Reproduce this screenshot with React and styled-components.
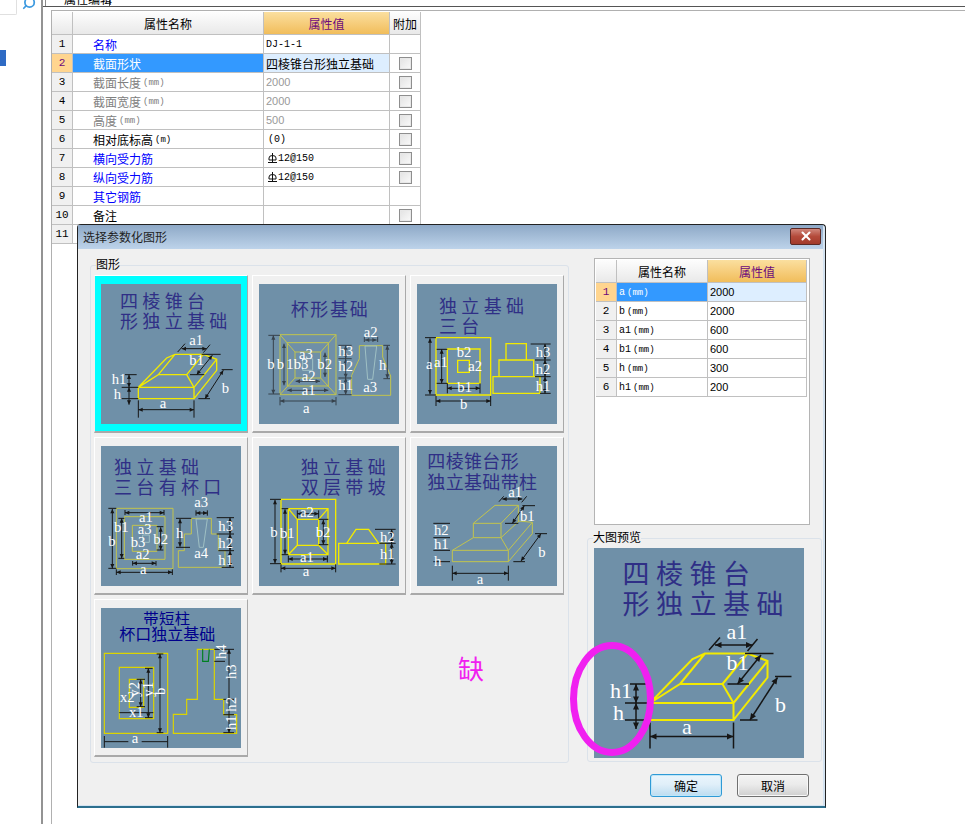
import React from "react";
import styled, { createGlobalStyle } from "styled-components";
import { Search, X } from "lucide-react";

const GlobalStyle = createGlobalStyle`
  html, body {
    margin: 0;
    padding: 0;
    background: #fff;
  }
  * { box-sizing: border-box; }
`;

const UI_FONT = `"Liberation Sans", "Noto Sans CJK SC", sans-serif`;

const Page = styled.div`
  position: relative;
  display: flex;
  width: 965px;
  height: 824px;
  overflow: hidden;
  background: #fff;
  color: #000;
  font: 12px ${UI_FONT};
`;

const Sidebar = styled.div`
  flex: 0 0 43px;
  border-right: 2px solid #939393;
`;

const SearchRow = styled.div`
  display: flex;
  height: 15px;
`;

const SearchInput = styled.div`
  width: 17px;
  border-right: 1px solid #e0e0e0;
  border-bottom: 1px solid #e0e0e0;
  border-radius: 0 0 2px 0;
`;

const SearchButton = styled.div`
  flex: 1;
  margin-top: -4px;
  padding-left: 5px;
  color: #3d9ae0;
  svg { transform: scaleX(-1); }
`;

const NavMarker = styled.div`
  width: 6px;
  height: 16px;
  margin-top: 35px;
  background: #2f6bc4;
`;

const Main = styled.div`
  flex: 1;
  min-width: 0;
`;

const TabStrip = styled.div`
  height: 7px;
  border-bottom: 1px solid #555;
  overflow: hidden;
  padding-left: 2px;
`;

const Tab = styled.div`
  width: 65px;
  height: 7px;
  padding-left: 18px;
  background: #fff;
  border-left: 1px solid #8a8a8a;
  border-right: 1px solid #555;
  white-space: nowrap;
  line-height: 0;
`;

const Sheet = styled.div`
  height: 814px;
  margin: 3px 0 0 8px;
  padding-top: 1px;
  border-top: 1px solid #b0b0b0;
  border-left: 1px solid #b0b0b0;
`;

const Grid = styled.div`
  display: grid;
  grid-template-columns: ${({ $cols }) => $cols};
  grid-template-rows: 23px;
  grid-auto-rows: 19px;
  width: max-content;
`;

const Cell = styled.div`
  display: flex;
  align-items: center;
  min-width: 0;
  white-space: nowrap;
  border-right: 1px solid #c0c0c0;
  border-bottom: 1px solid #c0c0c0;
  background: #fff;
`;

const HeadCell = styled(Cell)`
  justify-content: center;
  background: ${({ $accent }) =>
    $accent ? "linear-gradient(#fbdf9f, #f1bd5b)" : "linear-gradient(#fdfdfd, #e9e9e9)"};
  color: ${({ $accent }) => ($accent ? "#6c0a7c" : "#000")};
`;

const NumCell = styled(Cell)`
  justify-content: center;
  font: 11px "Liberation Mono", monospace;
  background: ${({ $active }) => ($active ? "#ffd58f" : "#f0f0f0")};
  color: ${({ $active }) => ($active ? "#6c0a7c" : "#000")};
`;

const toneColor = { link: "#0000ff", muted: "#808080", plain: "#000" };

const NameCell = styled(Cell)`
  padding-left: ${({ $indent }) => $indent}px;
  background: ${({ $active }) => ($active ? "#3399ff" : "#fff")};
  color: ${({ $active, $tone }) => ($active ? "#fff" : toneColor[$tone])};
`;

const valueFonts = {
  text: `12px ${UI_FONT}`,
  mono: `10px "Liberation Mono", monospace`,
  number: `11px "Liberation Sans", sans-serif`,
};

const ValueCell = styled(Cell)`
  padding-left: ${({ $indent }) => $indent || 2}px;
  background: ${({ $active }) => ($active ? "#ddeeff" : "#fff")};
  color: ${({ $muted }) => ($muted ? "#999" : "#000")};
  font: ${({ $kind }) => valueFonts[$kind || "number"]};
`;

const Unit = styled.span`
  margin: 2px 0 0 2px;
  line-height: 1;
  font: 9px "Liberation Mono", monospace;
`;

const ParamName = styled.span`
  line-height: 1;
  font: 10px "Liberation Mono", monospace;
`;

const AddCell = styled(Cell)`
  justify-content: center;
`;

const Check = styled.span`
  width: 13px;
  height: 13px;
  border: 1px solid #8e8e8e;
  background: linear-gradient(135deg, #e2e2e2, #fafafa);
  box-shadow: inset 0 0 0 1px #e8e8e8;
`;

const Rebar = styled.svg`
  width: 9px;
  height: 10px;
  margin: 0 1px 0 2px;
`;

const Dialog = styled.div`
  position: absolute;
  left: 77px;
  top: 224px;
  width: 749px;
  height: 584px;
  display: flex;
  flex-direction: column;
  padding: 0 2px 1px 0;
  background: #d4e3f1;
  border: 1px solid #222;
  border-bottom: 2px solid #2c6f8e;
  border-radius: 4px 4px 0 0;
`;

const TitleBar = styled.div`
  flex: 0 0 24px;
  display: flex;
  align-items: center;
  justify-content: space-between;
  padding: 0 2px 2px 5px;
  background: linear-gradient(#8ea9c7, #bdd3ea);
  color: #1f1f1f;
`;

const CloseButton = styled.div`
  width: 31px;
  height: 17px;
  display: flex;
  align-items: center;
  justify-content: center;
  color: #fff;
  background: linear-gradient(#d0867a, #b44a3a 50%, #a23b2c);
  border: 1px solid #5c2a26;
  border-radius: 2px;
`;

const DialogBody = styled.div`
  flex: 1;
  display: flex;
  flex-direction: column;
  padding: 9px 0 0 12px;
  background: #f0f0f0;
`;

const Columns = styled.div`
  display: flex;
  gap: 18px;
  height: 505px;
`;

const Group = styled.fieldset`
  margin: 0;
  min-width: 0;
  width: ${({ $width }) => $width}px;
  height: ${({ $height }) => $height}px;
  padding: 3px ${({ $pad }) => $pad}px 0;
  border: 1px solid #dbe2ea;
  border-radius: 3px;
`;

const Legend = styled.legend`
  padding: 0;
  margin-left: ${({ $shift }) => $shift}px;
  height: 14px;
  line-height: 14px;
  font-size: 12px;
`;

const TileGrid = styled.div`
  display: grid;
  grid-template-columns: repeat(3, 154px);
  grid-auto-rows: 158px;
  gap: 4px;
`;

const Tile = styled.div`
  display: flex;
  align-items: center;
  justify-content: center;
  background: ${({ $selected }) => ($selected ? "#00ffff" : "#f0f0f0")};
  border-top: 1px solid #fff;
  border-left: 1px solid ${({ $selected }) => ($selected ? "#f0f0f0" : "#fff")};
  border-right: 1px solid #a9a9a9;
  border-bottom: 2px solid #a9a9a9;
`;

const RightColumn = styled.div`
  display: flex;
  flex-direction: column;
  gap: 6px;
  width: 235px;
`;

const ParamBox = styled.div`
  width: 216px;
  height: 267px;
  margin-left: 7px;
  padding: 1px;
  background: #fff;
  border: 1px solid #b4b4b4;
`;

const Footer = styled.div`
  display: flex;
  justify-content: flex-end;
  gap: 15px;
  padding: 11px 14px 0 0;
`;

const Button = styled.div`
  width: 72px;
  height: 23px;
  display: flex;
  align-items: center;
  justify-content: center;
  border-radius: 3px;
  border: 1px solid ${({ $primary }) => ($primary ? "#2f9ad6" : "#707070")};
  background: ${({ $primary }) =>
    $primary ? "linear-gradient(#eaf5fc, #e0eff9 45%, #bcdcf0)" : "linear-gradient(#f3f3f3, #ebebeb 45%, #cfcfcf)"};
  box-shadow: inset 0 0 0 1px ${({ $primary }) => ($primary ? "#bfe6f8" : "#f8f8f8")};
`;

const Ring = styled.svg`
  position: absolute;
  left: 491px;
  top: 416px;
  width: 86px;
  height: 116px;
`;

const Missing = styled.div`
  position: absolute;
  left: 380px;
  top: 428px;
  color: #f020f0;
  font-size: 26px;
  line-height: 34px;
`;

// drawings are authored in 3x pixels, every picture is 420 units wide
const DrawingSvg = styled.svg`
  display: block;
  flex: none;
  width: ${({ $size }) => $size}px;
  height: ${({ $size }) => $size}px;
  background: #6f90a8;
`;

const Heading = styled.text`
  font-family: "Noto Sans CJK SC", sans-serif;
`;

const Label = styled.text`
  font-family: "Liberation Serif", serif;
  fill: #fff;
`;

const rect = (x1, y1, x2, y2) => `M${x1} ${y1}H${x2}V${y2}H${x1}Z`;
const INK = "#2f2f86";
const BRIGHT = "#f2ea00";
const OLIVE = "#c2c44e";
const PALE = "#9fc0c4";

const scenes = {
  pyramid: {
    box: "78 186 420 420",
    titles: [
      ["四棱锥台", 135, 258, 54, 13, INK],
      ["形独立基础", 135, 318, 54, 13, INK],
    ],
    shapes: [
      [BRIGHT, 4, rect(190, 496, 357, 530) + "M357 530L425 445V412L385 397H300L275 408L190 496M357 496L425 412M190 496L250 458H335L357 496M250 458L300 397M335 458L385 397"],
    ],
    ticks: "M190 535V587M357 535V587M150 458H185M140 496H190M140 530H190M440 443H473M370 530H405M308 390L330 365M385 392L405 368M380 397H437M345 458H388",
    dims: [[190, 563, 357, 563], [162, 458, 162, 496], [162, 496, 162, 548], [445, 445, 390, 530], [320, 380, 395, 380], [412, 400, 365, 458]],
    labels: [["a1", 343, 368], ["b1", 343, 430], ["h1", 110, 486], ["h", 116, 530], ["b", 440, 513], ["a", 254, 557]],
  },
  cup: {
    box: "552 186 420 420",
    titles: [["杯形基础", 647, 283, 54, 5, INK]],
    shapes: [
      [OLIVE, 3, rect(615, 338, 783, 518) + rect(637, 362, 760, 492) + rect(660, 390, 737, 468) + "M615 338L660 390M783 338L737 390M615 518L660 468M783 518L737 468M853 371H923V405L947 462V520H830V460L853 410Z"],
      [PALE, 3, rect(683, 410, 713, 445) + "M870 372H905L893 472H878Z"],
    ],
    ticks: "M580 340H615M580 516H615M615 525V550M783 525V550M790 370H830M790 410H830M790 468H830M790 518H830M868 345V360M908 345V360M925 370H945M925 470H945",
    dims: [[595, 340, 595, 516], [627, 365, 627, 490], [750, 392, 750, 465], [662, 478, 735, 478], [637, 505, 760, 505], [615, 537, 783, 537], [812, 370, 812, 410], [812, 410, 812, 468], [812, 468, 812, 518], [870, 354, 905, 354], [937, 370, 937, 470]],
    inkDim: "#37424c",
    labels: [["b", 577, 442], ["b", 605, 442], ["1b3", 634, 442], ["a3", 672, 410], ["b2", 727, 440], ["a2", 680, 478], ["a1", 680, 520], ["a", 684, 573], ["h3", 790, 402], ["h2", 790, 446], ["h1", 790, 505], ["a2", 866, 345], ["h", 912, 443], ["a3", 865, 510]],
  },
  threeTier: {
    box: "36 42 420 420",
    titles: [
      ["独立基础", 102, 128, 54, 13, INK],
      ["三台", 102, 190, 54, 13, INK],
    ],
    shapes: [
      [BRIGHT, 4, rect(93, 203, 257, 375) + rect(127, 237, 225, 340) + rect(158, 271, 193, 307) + rect(303, 221, 364, 270) + rect(282, 270, 386, 320) + rect(264, 320, 405, 370)],
    ],
    ticks: "M60 203H93M60 375H93M95 238H127M95 340H127M127 340V370M225 340V370M93 378V408M257 378V408M377 222H437M390 270H437M390 320H437M405 370H437",
    dims: [[75, 205, 75, 373], [110, 238, 110, 340], [127, 355, 225, 355], [93, 393, 257, 393], [420, 222, 420, 270], [420, 270, 420, 320], [420, 320, 420, 370]],
    labels: [["a", 63, 297], ["a1", 87, 292], ["b2", 155, 260], ["a2", 190, 304], ["b1", 157, 366], ["b", 165, 416], ["h3", 392, 262], ["h2", 392, 312], ["h1", 392, 362]],
  },
  threeCup: {
    box: "33 33 420 420",
    titles: [
      ["独立基础", 72, 116, 54, 13, INK],
      ["三台有杯口", 72, 178, 54, 13, INK],
    ],
    shapes: [
      [OLIVE, 3, rect(79, 220, 249, 401) + rect(103, 245, 225, 373) + rect(127, 271, 201, 349) + "M304 250H364V297H385V347H405V397H265V347H283V297H304Z"],
      [PALE, 3, rect(158, 300, 178, 322) + "M318 252H352L340 337H328Z"],
    ],
    ticks: "M55 220H79M55 400H79M85 250H103M85 370H103M105 225V240M222 225V240M79 403V420M247 403V420M128 378V392M198 378V392M200 275H220M200 345H220M258 250H304M258 337H300M318 226V242M352 226V242M380 248H432M380 297H432M385 347H432M395 397H432",
    dims: [[67, 222, 67, 400], [95, 250, 95, 370], [105, 233, 222, 233], [79, 412, 247, 412], [128, 385, 198, 385], [212, 277, 212, 345], [270, 252, 270, 335], [318, 234, 352, 234], [420, 248, 420, 297], [420, 297, 420, 347], [420, 347, 420, 397]],
    labels: [["a1", 147, 260], ["b1", 72, 290], ["a3", 143, 298], ["b3", 122, 335], ["b2", 190, 328], ["a2", 137, 372], ["b", 55, 333], ["a", 150, 417], ["a3", 313, 216], ["h", 258, 308], ["a4", 313, 370], ["h3", 385, 288], ["h2", 385, 338], ["h1", 385, 390]],
  },
  doubleSlope: {
    box: "507 33 420 420",
    titles: [
      ["独立基础", 632, 116, 54, 13, INK],
      ["双层带坡", 632, 178, 54, 13, INK],
    ],
    shapes: [
      [BRIGHT, 4, rect(573, 193, 737, 387) + rect(595, 221, 714, 359) + rect(622, 253, 686, 331) + "M595 221L622 253M714 221L686 253M595 359L622 331M714 359L686 331" + rect(746, 325, 887, 387) + "M770 325L798 283H836L866 325"],
    ],
    ticks: "M540 193H573M540 386H573M575 221H595M575 359H595M622 226V250M686 226V250M686 253H715M686 329H715M595 362V382M712 362V382M573 388V412M737 388V412M855 283H917M868 325H917M868 387H917",
    dims: [[555, 195, 555, 385], [585, 223, 585, 357], [622, 236, 686, 236], [700, 255, 700, 329], [595, 372, 712, 372], [573, 400, 737, 400], [905, 283, 905, 325], [905, 325, 905, 387]],
    labels: [["b", 541, 305], ["b1", 570, 310], ["a2", 630, 245], ["b2", 677, 305], ["a1", 630, 382], ["a", 638, 423], ["h2", 870, 322], ["h1", 870, 372]],
  },
  columnPyramid: {
    box: "36 33 420 420",
    titles: [
      ["四棱锥台形", 67, 98, 54, 1, INK],
      ["独立基础带柱", 67, 162, 54, 1, INK],
    ],
    shapes: [
      [OLIVE, 3, rect(142, 346, 310, 380) + "M310 346L382 262V296L310 380M205 265H288V308H205ZM205 265L270 211H340L288 265M340 211V258M288 308L342 258L382 262M205 308L142 346M288 308L310 346"],
    ],
    ticks: "M142 392V437M310 392V437M85 265H135M85 308H135M85 346H135M85 380H135M390 296H426M325 380H360M352 212H390M300 265H340M282 200L296 184M350 202L365 184",
    dims: [[142, 415, 310, 415], [292, 192, 352, 192], [358, 212, 322, 265], [408, 296, 348, 378]],
    labels: [["a1", 310, 185], ["b1", 345, 258], ["b", 400, 365], ["h2", 87, 300], ["h1", 87, 343], ["h", 87, 392], ["a", 215, 447]],
  },
  shortColumn: {
    box: "33 39 420 420",
    titles: [
      ["带短柱", 160, 88, 46, 1, "#00008c"],
      ["杯口独立基础", 88, 136, 48, 0, "#00008c"],
    ],
    shapes: [
      ["#dcd400", 3.5, rect(43, 175, 233, 415) + rect(88, 217, 191, 371) + rect(118, 253, 161, 337) + "M322 163H373V313H401V359H440V415H250V358H290V313H322Z"],
      ["#008020", 3.5, "M338 163V199H355L358 163"],
    ],
    ticks: "M43 423V458M233 423V458M43 440H115M155 440H233M88 353H190M200 177H220M200 413H220M165 220H188M165 368H188M140 253H165M140 335H165M373 163H432M373 199H405M400 313H432M400 359H432M400 413H432",
    dims: [[210, 177, 210, 413], [175, 220, 175, 368], [152, 253, 152, 335], [417, 163, 417, 413]],
    labels: [["x2", 90, 322], ["x1", 117, 367], ["a", 125, 445], ["y2", 148, 305, true], ["y1", 188, 305, true], ["b", 226, 300, true], ["h4", 408, 192, true], ["h3", 438, 252, true], ["h2", 438, 350, true], ["h1", 438, 405, true]],
  },
};

const arrowHead = (x1, y1, x2, y2) => {
  const len = Math.hypot(x2 - x1, y2 - y1) || 1;
  const ux = (x2 - x1) / len;
  const uy = (y2 - y1) / len;
  return `M${x1} ${y1}L${x1 + 13 * ux - 6 * uy} ${y1 + 13 * uy + 6 * ux}L${x1 + 13 * ux + 6 * uy} ${y1 + 13 * uy - 6 * ux}Z`;
};

const Drawing = ({ name, size = 140 }) => {
  const scene = scenes[name];
  const ink = scene.inkDim || "#161616";
  return (
    <DrawingSvg $size={size} viewBox={scene.box}>
      {scene.shapes.map(([color, width, d]) => (
        <path key={d} d={d} fill="none" stroke={color} strokeWidth={width} />
      ))}
      <path d={scene.ticks} fill="none" stroke={ink} strokeWidth="3" />
      {scene.dims.map(([x1, y1, x2, y2]) => (
        <g key={`${x1}-${y1}-${x2}-${y2}`}>
          <line x1={x1} y1={y1} x2={x2} y2={y2} stroke={ink} strokeWidth="3" />
          <path d={arrowHead(x1, y1, x2, y2)} fill={ink} />
          <path d={arrowHead(x2, y2, x1, y1)} fill={ink} />
        </g>
      ))}
      {scene.titles.map(([text, x, y, fontSize, spacing, color]) => (
        <Heading key={text} x={x} y={y} fontSize={fontSize} letterSpacing={spacing} fill={color}>
          {text}
        </Heading>
      ))}
      {scene.labels.map(([text, x, y, turned]) => (
        <Label
          key={`${text}-${x}`}
          x={x}
          y={y}
          fontSize="44"
          transform={turned ? `rotate(-90 ${x} ${y})` : undefined}
        >
          {text}
        </Label>
      ))}
    </DrawingSvg>
  );
};

const RebarMark = () => (
  <Rebar viewBox="0 0 9 10">
    <path d="M1 7V5a3.5 2.5 0 0 1 7 0V7H1M4.5 0V9M0 9.5H9" fill="none" stroke="#111" strokeWidth="1" />
  </Rebar>
);

const propertyRows = [
  { name: "名称", tone: "link", value: "DJ-1-1", kind: "mono" },
  { name: "截面形状", tone: "plain", value: "四棱锥台形独立基础", kind: "text", check: true, active: true },
  { name: "截面长度", unit: "(mm)", tone: "muted", value: "2000", muted: true, check: true },
  { name: "截面宽度", unit: "(mm)", tone: "muted", value: "2000", muted: true, check: true },
  { name: "高度", unit: "(mm)", tone: "muted", value: "500", muted: true, check: true },
  { name: "相对底标高", unit: "(m)", tone: "plain", value: "(0)", kind: "mono", indent: 4, check: true },
  { name: "横向受力筋", tone: "link", value: <><RebarMark />12@150</>, kind: "mono", check: true },
  { name: "纵向受力筋", tone: "link", value: <><RebarMark />12@150</>, kind: "mono", check: true },
  { name: "其它钢筋", tone: "link" },
  { name: "备注", tone: "plain", check: true },
  { name: "", tone: "plain" },
];

const paramRows = [
  ["a", "2000"],
  ["b", "2000"],
  ["a1", "600"],
  ["b1", "600"],
  ["h", "300"],
  ["h1", "200"],
];

const tiles = ["pyramid", "cup", "threeTier", "threeCup", "doubleSlope", "columnPyramid", "shortColumn"];

const App = () => {
  return (
    <Page>
      <GlobalStyle />
      <Sidebar>
        <SearchRow>
          <SearchInput />
          <SearchButton>
            <Search size={14} strokeWidth={3} />
          </SearchButton>
        </SearchRow>
        <NavMarker />
      </Sidebar>

      <Main>
        <TabStrip>
          <Tab>属性编辑</Tab>
        </TabStrip>
        <Sheet>
          <Grid $cols="21px 191px 126px 31px">
            <HeadCell />
            <HeadCell>属性名称</HeadCell>
            <HeadCell $accent>属性值</HeadCell>
            <HeadCell>附加</HeadCell>
            {propertyRows.map((row, i) => (
              <React.Fragment key={i}>
                <NumCell $active={row.active}>{i + 1}</NumCell>
                <NameCell $indent={20} $tone={row.tone} $active={row.active}>
                  {row.name}
                  {row.unit && <Unit>{row.unit}</Unit>}
                </NameCell>
                <ValueCell $active={row.active} $muted={row.muted} $kind={row.kind} $indent={row.indent}>
                  {row.value}
                </ValueCell>
                <AddCell>{row.check && <Check />}</AddCell>
              </React.Fragment>
            ))}
          </Grid>
        </Sheet>
      </Main>

      <Dialog>
        <TitleBar>
          选择参数化图形
          <CloseButton>
            <X size={14} strokeWidth={3.5} />
          </CloseButton>
        </TitleBar>
        <DialogBody>
          <Columns>
            <Group $width={479} $height={505} $pad={3}>
              <Legend $shift={2}>图形</Legend>
              <TileGrid>
                {tiles.map((name, i) => (
                  <Tile key={name} $selected={i === 0}>
                    <Drawing name={name} />
                  </Tile>
                ))}
              </TileGrid>
            </Group>
            <RightColumn>
              <ParamBox>
                <Grid $cols="21px 91px 99px">
                  <HeadCell />
                  <HeadCell>属性名称</HeadCell>
                  <HeadCell $accent>属性值</HeadCell>
                  {paramRows.map(([name, value], i) => (
                    <React.Fragment key={name}>
                      <NumCell $active={i === 0}>{i + 1}</NumCell>
                      <NameCell $indent={2} $tone="plain" $active={i === 0}>
                        <ParamName>{name}</ParamName>
                        <Unit>(mm)</Unit>
                      </NameCell>
                      <ValueCell $active={i === 0}>{value}</ValueCell>
                    </React.Fragment>
                  ))}
                </Grid>
              </ParamBox>
              <Group $width={235} $height={231} $pad={6}>
                <Legend $shift={-1}>大图预览</Legend>
                <Drawing name="pyramid" size={210} />
              </Group>
            </RightColumn>
          </Columns>
          <Footer>
            <Button $primary>确定</Button>
            <Button>取消</Button>
          </Footer>
        </DialogBody>
        <Missing>缺</Missing>
        <Ring viewBox="0 0 86 116">
          <ellipse cx="43" cy="58" rx="38.5" ry="53.5" fill="none" stroke="#f020f0" strokeWidth="7" />
        </Ring>
      </Dialog>
    </Page>
  );
};

export default App;
